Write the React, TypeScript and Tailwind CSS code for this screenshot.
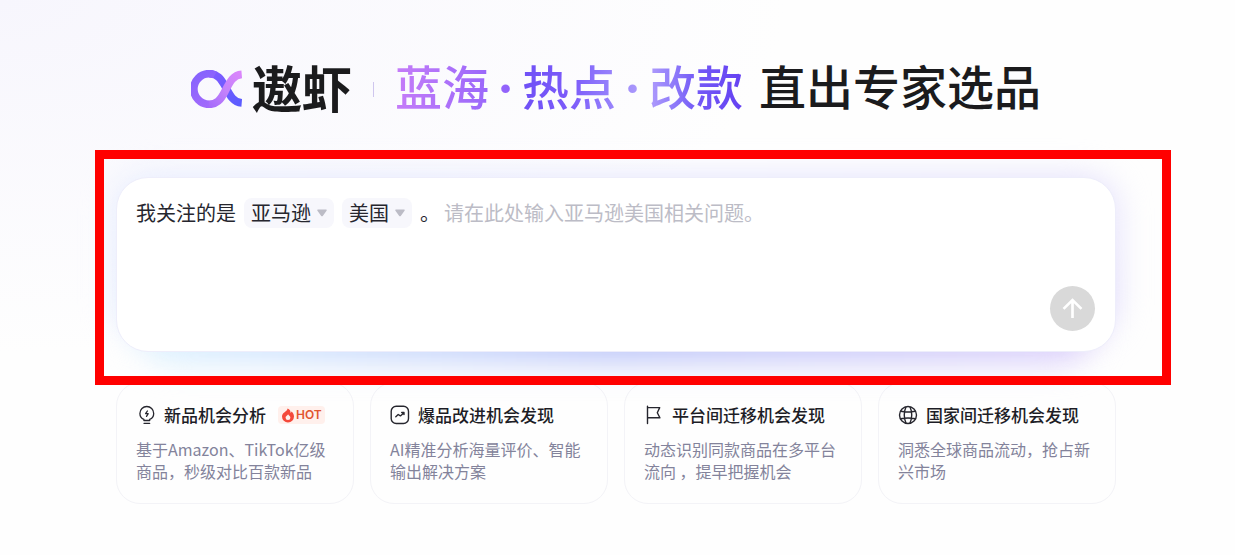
import { useState, type ReactNode } from 'react';

function BrandMark() {
  return (
    <svg className="h-[38px] w-[51px] shrink-0" viewBox="33 59 150 113" fill="none" aria-hidden="true">
      <defs>
        <linearGradient id="ring" gradientUnits="userSpaceOnUse" x1="60" y1="60" x2="110" y2="172">
          <stop offset="0" stopColor="#8562fd" />
          <stop offset="1" stopColor="#a66bfb" />
        </linearGradient>
        <linearGradient id="tail" gradientUnits="userSpaceOnUse" x1="100" y1="75" x2="180" y2="165">
          <stop offset="0" stopColor="#7d5cff" />
          <stop offset="1" stopColor="#5a5cff" />
        </linearGradient>
        <linearGradient id="ribbon" gradientUnits="userSpaceOnUse" x1="182" y1="65" x2="85" y2="165">
          <stop offset="0" stopColor="#dc86fb" />
          <stop offset="0.5" stopColor="#c583fb" />
          <stop offset="1" stopColor="#a66bfb" />
        </linearGradient>
      </defs>
      <path d="M86 70C110 70 121 84 134 108C148 135 158 155 183 157" stroke="url(#tail)" strokeWidth="23" />
      <path d="M86 161A45.500 45.500 0 0 1 86 70C92 70 98 71 103 74" stroke="url(#ring)" strokeWidth="23" />
      <path d="M183 72C158 74 148 94 134 121C120 149 108 161 85 161" stroke="url(#ribbon)" strokeWidth="23" />
    </svg>
  );
}

const iconClass = 'size-5 shrink-0 text-[#26262e]';

function BulbIcon() {
  return (
    <svg className={iconClass} viewBox="0 0 20 20" fill="none" stroke="currentColor" strokeWidth="1.300" strokeLinecap="round" strokeLinejoin="round" aria-hidden="true">
      <path d="M7.900 15.500V14.400C5.500 13.400 3.900 11.200 3.900 8.400a6.900 6.900 0 0 1 13.800 0c0 2.800-1.600 5-4 6v1.100Z" />
      <path d="M8 18.300h5.700" />
      <path d="M11.400 6 9.600 8.700h2.600L10.500 11.400" />
    </svg>
  );
}

function TrendIcon() {
  return (
    <svg className={iconClass} viewBox="0 0 20 20" fill="none" stroke="currentColor" strokeWidth="1.400" strokeLinecap="round" strokeLinejoin="round" aria-hidden="true">
      <rect x="1.200" y="1.200" width="17.300" height="17.300" rx="5" />
      <path d="m5.800 11.700 2.400-2.200 2.200 1.400 3.600-3.200M11.700 7.500H14V9.600" />
    </svg>
  );
}

function FlagIcon() {
  return (
    <svg className={iconClass} viewBox="0 0 20 20" fill="none" stroke="currentColor" strokeWidth="1.400" strokeLinecap="round" strokeLinejoin="round" aria-hidden="true">
      <path d="M3.500 1.300v17.200M3.500 2.600h12.200L13.300 7.700l2.600 5.100H3.500" />
    </svg>
  );
}

function GlobeIcon() {
  return (
    <svg className={iconClass} viewBox="0 0 20 20" fill="none" stroke="currentColor" strokeWidth="1.400" aria-hidden="true">
      <circle cx="10" cy="10" r="8.500" />
      <path d="M8 1.800C5.800 7 5.800 13 8 18.200M12 1.800c2.200 5.200 2.200 11.200 0 16.400M2.600 6.300c4.900 1 9.900 1 14.800 0M2.600 13.700c4.900-1 9.900-1 14.800 0" />
    </svg>
  );
}

function HotBadge() {
  return (
    <span className="ml-1 flex h-[18px] items-center gap-px rounded-sm bg-[#fff0ec] pr-[3px] pl-[3px] font-[Inter,'Liberation_Sans',sans-serif] text-xs font-semibold text-[#e2552f]">
      <svg className="h-[15px] w-[14px]" viewBox="0 0 14 15" aria-hidden="true">
        <path d="M6.600.6C9.300 1.700 9.600 3.500 9.500 4.900c.6-.3.900-.7 1.100-1.300C12 5 13 6.700 13 8.600a6 6 0 0 1-12 0c0-2 1.100-3.300 2.600-4.400C5.200 3.100 6.500 2.200 6.600.6Z" fill="#f4493a" />
        <path d="M7.100 6.200c.3 1.200 2.300 1.700 2.300 3.500a2.400 2.400 0 0 1-4.800 0c0-1 .5-1.500 1.100-2 .7-.5 1.200-.8 1.400-1.500Z" fill="#fff0ec" />
      </svg>
      HOT
    </span>
  );
}

function ChipSelect({ label, options, className }: { label: string; options: string[]; className: string }) {
  return (
    <span className="relative shrink-0">
      <select
        aria-label={label}
        className={`h-[30px] cursor-pointer appearance-none rounded-lg bg-[#f7f7fc] pl-[7px] text-xl leading-[30px] text-[#26262e] outline-none ${className}`}
      >
        {options.map((option) => (
          <option key={option}>{option}</option>
        ))}
      </select>
      <svg className="pointer-events-none absolute top-[11px] right-[7px] h-2 w-2.5 text-[#bcbcc6]" viewBox="0 0 9 7" aria-hidden="true">
        <path d="M1 .4h7c.7 0 1 .6.600 1.100L5.200 6.100c-.4.500-1 .5-1.400 0L.4 1.500C0 1 .3.400 1 .4Z" fill="currentColor" />
      </svg>
    </span>
  );
}

function Dot() {
  return <span className="inline-block w-[33px] text-center font-[Inter,sans-serif] font-extrabold">·</span>;
}

type Feature = { title: string; text: string; icon: ReactNode; hot?: boolean };

const features: Feature[] = [
  { title: '新品机会分析', text: '基于Amazon、TikTok亿级商品，秒级对比百款新品', icon: <BulbIcon />, hot: true },
  { title: '爆品改进机会发现', text: 'AI精准分析海量评价、智能输出解决方案', icon: <TrendIcon /> },
  { title: '平台间迁移机会发现', text: '动态识别同款商品在多平台流向 ，提早把握机会', icon: <FlagIcon /> },
  { title: '国家间迁移机会发现', text: '洞悉全球商品流动，抢占新兴市场', icon: <GlobeIcon /> },
];

export default function App() {
  const [question, setQuestion] = useState('');

  return (
    <main
      lang="zh-CN"
      className="min-h-screen overflow-hidden bg-[#fefefe] bg-[radial-gradient(ellipse_at_top_left,#f7f6fd_0%,#fefefe_45%)] pt-[57px] pr-[3px] pb-12 font-['Noto_Sans_CJK_SC',sans-serif]"
    >
      <header className="flex h-16 items-center justify-center whitespace-nowrap text-[#1b1b1d]">
        <BrandMark />
        <span className="ml-2.5 pb-1.5 text-[50px] leading-[64px] font-bold">遨虾</span>
        <span className="mx-[21px] h-[15px] w-px bg-[#cfc6ee]" />
        <h1 className="flex pb-1.5 text-[47px] leading-[64px] font-medium">
          <span className="bg-linear-to-r from-[#c57cf8] to-[#8b5ffb] bg-clip-text text-transparent">
            蓝海<Dot />
          </span>
          <span className="bg-linear-to-r from-[#6f50f6] via-[#7d5cfa] via-40% to-[#b3a2fb] bg-clip-text text-transparent">
            热点<Dot />
          </span>
          <span className="bg-linear-to-r from-[#b09cfc] via-[#7459f6] via-50% to-[#6440f2] bg-clip-text text-transparent">改款</span>
          <span className="ml-4">直出专家选品</span>
        </h1>
      </header>

      <div className="mx-auto mt-14 max-w-[1000px]">
        <section className="relative">
          <div className="absolute inset-x-0 top-0 bottom-4 rounded-[32px] bg-linear-to-r from-[#e4ebff] to-[#e2defc] blur-lg" />
          <div className="absolute inset-x-6 top-16 -bottom-2.5 rounded-[32px] bg-linear-to-r from-[#dcf3ff] via-[#bcc6f9] via-50% to-[#dccffb] blur-lg" />
          <form
            className="relative flex h-[175px] flex-col rounded-[32px] border border-[#eeeefb] bg-white py-5 pr-5 pl-[19px]"
            onSubmit={(event) => event.preventDefault()}
          >
            <div className="flex items-start gap-2 text-xl leading-[30px] text-[#26262e]">
              <label htmlFor="question" className="shrink-0">我关注的是</label>
              <ChipSelect label="平台" options={['亚马逊', 'TikTok']} className="w-[90px]" />
              <ChipSelect label="国家" options={['美国', '英国']} className="w-[70px]" />
              <span className="-mr-1 shrink-0">。</span>
              <textarea
                id="question"
                rows={2}
                value={question}
                onChange={(event) => setQuestion(event.target.value)}
                placeholder="请在此处输入亚马逊美国相关问题。"
                className="min-w-0 flex-1 resize-none bg-transparent outline-none placeholder:text-[#bcbcc6]"
              />
            </div>
            <button
              type="submit"
              aria-label="发送"
              className="mt-auto flex size-[45px] shrink-0 items-center justify-center self-end rounded-full bg-[#d9d9d9] text-white"
            >
              <svg className="size-[21px]" viewBox="0 0 22 22" fill="none" stroke="currentColor" strokeWidth="2.800" aria-hidden="true">
                <path d="M11 21V2.500M1.600 11.400l9.400-9.200 9.400 9.200" />
              </svg>
            </button>
          </form>
          <div className="pointer-events-none absolute -top-[27px] -right-[55px] -bottom-[33px] -left-[21px] z-10 border-[9px] border-[#ff0000]" />
        </section>

        <ul className="mt-[30px] grid grid-cols-4 gap-4">
          {features.map((feature) => (
            <li key={feature.title} className="rounded-3xl border border-[#f3f3f7] bg-[#fefefe] px-[19px] pt-[19px] pb-[21px]">
              <div className="flex items-center gap-2 whitespace-nowrap">
                {feature.icon}
                <h2 className="text-[17px] leading-[26px] font-medium text-[#1d1d26]">{feature.title}</h2>
                {feature.hot && <HotBadge />}
              </div>
              <p className="mt-2.5 text-base leading-[22px] text-[#83839b]">{feature.text}</p>
            </li>
          ))}
        </ul>
      </div>
    </main>
  );
}
